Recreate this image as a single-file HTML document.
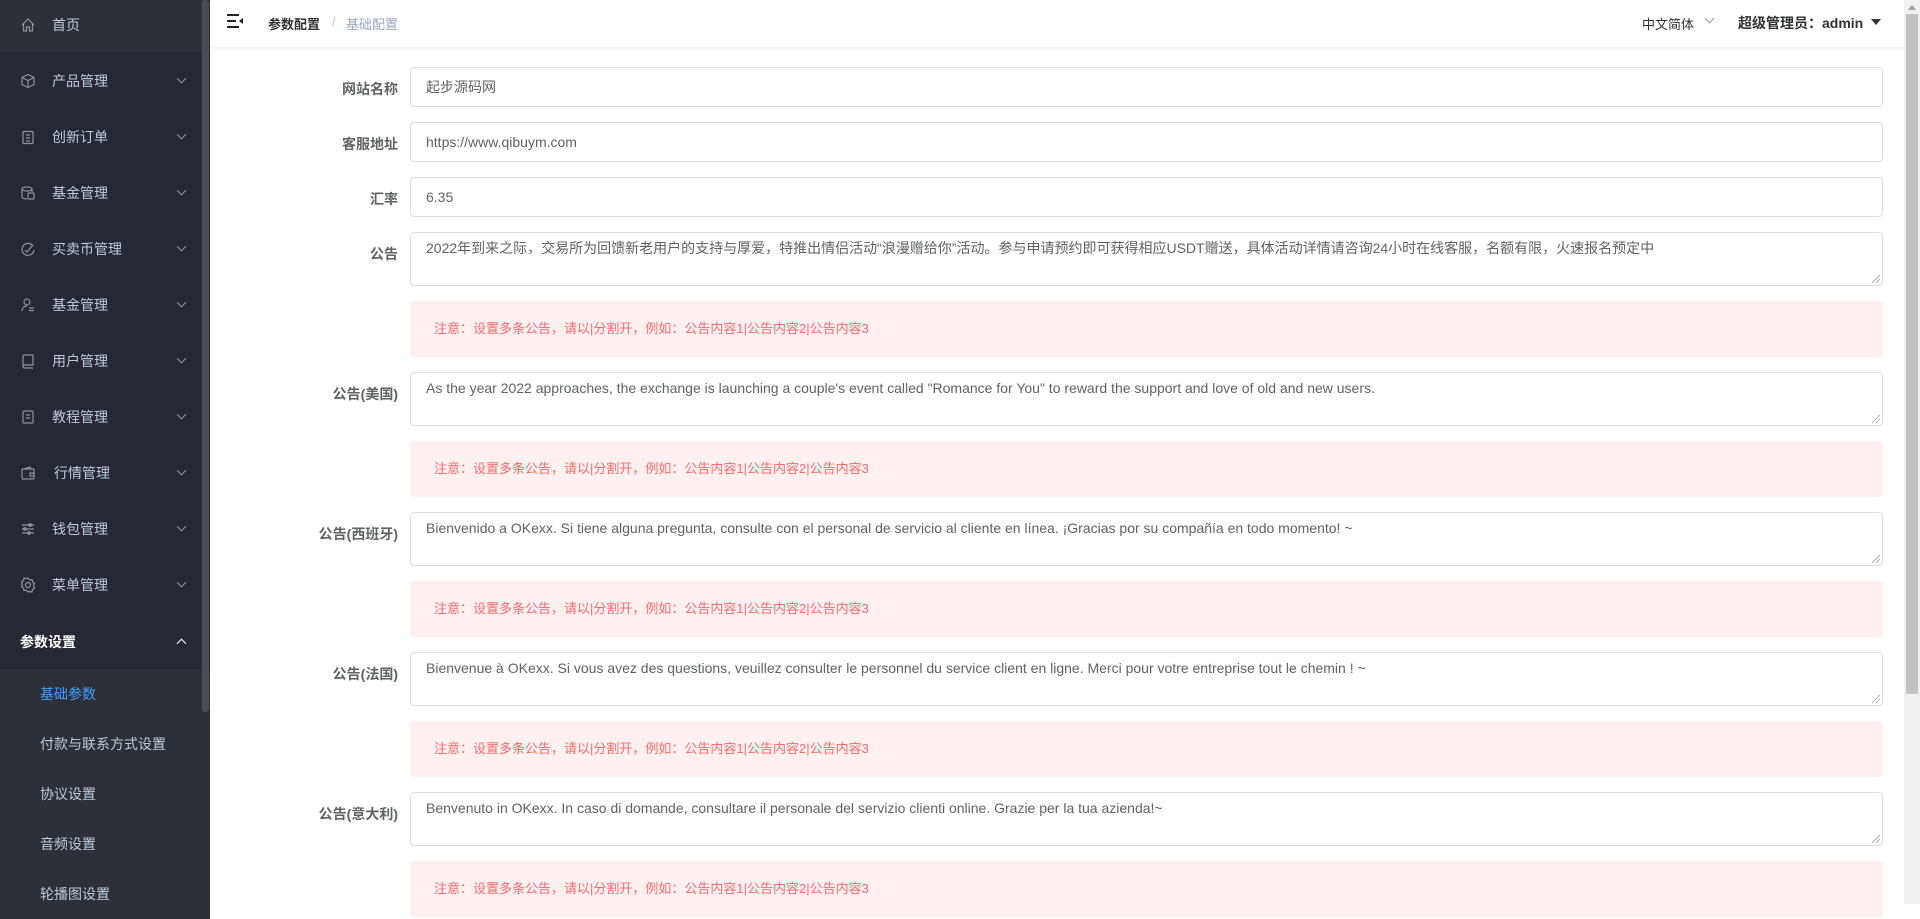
<!DOCTYPE html>
<html><head><meta charset="utf-8"><style>
*{box-sizing:border-box;margin:0;padding:0}
body{width:1920px;height:904px;overflow:hidden;font-family:"Liberation Sans","Noto Sans CJK SC",sans-serif;background:#fff;position:relative}
.side{position:absolute;left:0;top:0;width:210px;height:904px;background:#262833;color:#bfcbd9;font-size:14px}
.it{position:absolute;left:0;width:210px;height:56px;display:flex;align-items:center}
.it .ic{position:absolute;left:20px;width:16px;height:16px}
.it .tx{position:absolute;left:52px}
.it .ar{position:absolute;left:178px;width:7px;height:7px;border-right:1px solid #909399;border-bottom:1px solid #909399;transform:rotate(45deg);top:22px}
.sub{position:absolute;left:0;width:210px;height:50px;background:#2e3038;display:flex;align-items:center;padding-left:40px;color:#bfcbd9;font-size:14px}
.sb{position:absolute;left:202px;top:0;width:7px;height:712px;background:#4a4c55;border-radius:3px}
.hdr{position:absolute;left:210px;top:0;width:1694px;height:47px;background:#fff;box-shadow:0 1px 4px rgba(0,21,41,.08)}
.lbl{position:absolute;right:1522px;font-size:14px;font-weight:bold;color:#606266;white-space:nowrap}
.inp{position:absolute;left:410px;width:1473px;border:1px solid #dcdfe6;border-radius:4px;font-size:14px;color:#606266;padding-left:15px}
.ta{height:54px;padding-top:5px;line-height:20px}
.ta:after{content:"";position:absolute;right:2px;bottom:2px;width:8px;height:8px;background:linear-gradient(135deg,transparent 45%,#999 45%,#999 52%,transparent 52%,transparent 70%,#999 70%,#999 77%,transparent 77%)}
.al{position:absolute;left:410px;width:1473px;height:56px;background:#fef0f0;border-radius:4px;color:#f56c6c;font-size:13px;padding-left:24px;line-height:56px}
.vs{position:absolute;left:1904px;top:0;width:16px;height:904px;background:#f1f1f1}
</style></head><body>
<div class="side">
<div style="position:absolute;left:0;top:0;width:210px;height:52px;background:#2e3038"></div>
<div class="it" style="top:-3px"><svg class="ic" viewBox="0 0 16 16" fill="none" stroke="#909399" stroke-width="1.2"><path d="M2 8L8 2l6 6M3.5 6.5V14h3v-4h3v4h3V6.5"/></svg><span class="tx">首页</span></div>
<div class="it" style="top:53px"><svg class="ic" viewBox="0 0 16 16" fill="none" stroke="#909399" stroke-width="1.2"><path d="M8 1.5l6 3v7l-6 3-6-3v-7zM2 4.5l6 3 6-3M8 7.5v7"/></svg><span class="tx">产品管理</span><i class="ar"></i></div>
<div class="it" style="top:109px"><svg class="ic" viewBox="0 0 16 16" fill="none" stroke="#909399" stroke-width="1.2"><rect x="3" y="2.5" width="10" height="12" rx="1"/><path d="M6 6h4M6 9h4M6 12h4"/></svg><span class="tx">创新订单</span><i class="ar"></i></div>
<div class="it" style="top:165px"><svg class="ic" viewBox="0 0 16 16" fill="none" stroke="#909399" stroke-width="1.2"><ellipse cx="7" cy="4" rx="5" ry="2"/><path d="M2 4v8c0 1 2 2 5 2M12 4v3"/><rect x="8" y="8" width="6" height="6" rx="1"/></svg><span class="tx">基金管理</span><i class="ar"></i></div>
<div class="it" style="top:221px"><svg class="ic" viewBox="0 0 16 16" fill="none" stroke="#909399" stroke-width="1.2"><path d="M13 5A6 6 0 1 0 14 9M5 9l2 2 6-7"/></svg><span class="tx">买卖币管理</span><i class="ar"></i></div>
<div class="it" style="top:277px"><svg class="ic" viewBox="0 0 16 16" fill="none" stroke="#909399" stroke-width="1.2"><circle cx="7" cy="5" r="3"/><path d="M2 14c0-3 2-5 5-5M9 11h5M9 13.5h5"/></svg><span class="tx">基金管理</span><i class="ar"></i></div>
<div class="it" style="top:333px"><svg class="ic" viewBox="0 0 16 16" fill="none" stroke="#909399" stroke-width="1.2"><path d="M3 2h10v10H4.5a1.5 1.5 0 0 0 0 3H13M3 2v11.5"/></svg><span class="tx">用户管理</span><i class="ar"></i></div>
<div class="it" style="top:389px"><svg class="ic" viewBox="0 0 16 16" fill="none" stroke="#909399" stroke-width="1.2"><rect x="3" y="2" width="10" height="12" rx="1"/><path d="M6 6h4M6 9h4"/></svg><span class="tx">教程管理</span><i class="ar"></i></div>
<div class="it" style="top:445px"><svg class="ic" viewBox="0 0 16 16" fill="none" stroke="#909399" stroke-width="1.2"><rect x="2" y="4" width="12" height="10" rx="1"/><path d="M4 4l6-2 1 2M10 8h4v3h-4z"/></svg><span class="tx" style="left:54px">行情管理</span><i class="ar"></i></div>
<div class="it" style="top:501px"><svg class="ic" viewBox="0 0 16 16" fill="none" stroke="#909399" stroke-width="1.2"><path d="M2 4h12M2 8h12M2 12h12"/><circle cx="10" cy="4" r="1.3"/><circle cx="5" cy="8" r="1.3"/><circle cx="9" cy="12" r="1.3"/></svg><span class="tx">钱包管理</span><i class="ar"></i></div>
<div class="it" style="top:557px"><svg class="ic" viewBox="0 0 16 16" fill="none" stroke="#909399" stroke-width="1.2"><circle cx="8" cy="8" r="2.5"/><path d="M8 1l1.5 2 2.5-.5.5 2.5 2 1.5-1 2.3 1 2.2-2 1.5-.5 2.5-2.5-.5L8 15l-1.5-2-2.5.5-.5-2.5-2-1.5 1-2.2-1-2.3 2-1.5.5-2.5 2.5.5z"/></svg><span class="tx">菜单管理</span><i class="ar"></i></div>
<div class="it" style="top:614px;color:#fff;font-weight:bold"><span class="tx" style="left:20px">参数设置</span><i class="ar" style="transform:rotate(225deg);top:26px;border-color:#fff"></i></div>
<div class="sub" style="top:669px;color:#409eff">基础参数</div>
<div class="sub" style="top:719px">付款与联系方式设置</div>
<div class="sub" style="top:769px">协议设置</div>
<div class="sub" style="top:819px">音频设置</div>
<div class="sub" style="top:869px">轮播图设置</div>
<div class="sb"></div>
</div>
<div class="hdr">
<svg style="position:absolute;left:17px;top:14px" width="16" height="14" viewBox="0 0 16 14"><path d="M0 1h12M0 7h9M0 13h12" stroke="#222" stroke-width="2"/><path d="M16 4v6l-4-3z" fill="#222"/></svg>
<span style="position:absolute;left:58px;top:14px;font-size:13px;font-weight:bold;color:#303133">参数配置</span>
<span style="position:absolute;left:122px;top:14px;font-size:13px;color:#c0c4cc">/</span>
<span style="position:absolute;left:136px;top:14px;font-size:13px;color:#97a8be">基础配置</span>
<span style="position:absolute;left:1432px;top:14px;font-size:13px;color:#303133">中文简体</span>
<i style="position:absolute;left:1496px;top:15px;width:7px;height:7px;border-right:1px solid #909399;border-bottom:1px solid #909399;transform:rotate(45deg)"></i>
<span style="position:absolute;left:1528px;top:13px;font-size:14px;font-weight:bold;color:#303133">超级管理员：admin</span>
<span style="position:absolute;left:1661px;top:19px;border:5px solid transparent;border-top:6px solid #303133"></span>
</div>
<div class="lbl" style="top:79px">网站名称</div>
<div class="inp" style="top:67px;height:40px;line-height:38px">起步源码网</div>
<div class="lbl" style="top:134px">客服地址</div>
<div class="inp" style="top:122px;height:40px;line-height:38px">https://www.qibuym.com</div>
<div class="lbl" style="top:189px">汇率</div>
<div class="inp" style="top:177px;height:40px;line-height:38px">6.35</div>

<div class="lbl" style="top:244px">公告</div>
<div class="inp ta" style="top:232px">2022年到来之际，交易所为回馈新老用户的支持与厚爱，特推出情侣活动“浪漫赠给你”活动。参与申请预约即可获得相应USDT赠送，具体活动详情请咨询24小时在线客服，名额有限，火速报名预定中</div>
<div class="al" style="top:301px">注意：设置多条公告，请以|分割开，例如：公告内容1|公告内容2|公告内容3</div>

<div class="lbl" style="top:384px">公告(美国)</div>
<div class="inp ta" style="top:372px">As the year 2022 approaches, the exchange is launching a couple's event called "Romance for You" to reward the support and love of old and new users.</div>
<div class="al" style="top:441px">注意：设置多条公告，请以|分割开，例如：公告内容1|公告内容2|公告内容3</div>

<div class="lbl" style="top:524px">公告(西班牙)</div>
<div class="inp ta" style="top:512px">Bienvenido a OKexx. Si tiene alguna pregunta, consulte con el personal de servicio al cliente en línea. ¡Gracias por su compañía en todo momento! ~</div>
<div class="al" style="top:581px">注意：设置多条公告，请以|分割开，例如：公告内容1|公告内容2|公告内容3</div>

<div class="lbl" style="top:664px">公告(法国)</div>
<div class="inp ta" style="top:652px">Bienvenue à OKexx. Si vous avez des questions, veuillez consulter le personnel du service client en ligne. Merci pour votre entreprise tout le chemin ! ~</div>
<div class="al" style="top:721px">注意：设置多条公告，请以|分割开，例如：公告内容1|公告内容2|公告内容3</div>

<div class="lbl" style="top:804px">公告(意大利)</div>
<div class="inp ta" style="top:792px">Benvenuto in OKexx. In caso di domande, consultare il personale del servizio clienti online. Grazie per la tua azienda!~</div>
<div class="al" style="top:861px">注意：设置多条公告，请以|分割开，例如：公告内容1|公告内容2|公告内容3</div>

<div class="vs"><div style="position:absolute;left:2px;top:14px;width:12px;height:680px;background:#c1c1c1"></div><div style="position:absolute;left:4px;top:5px;border:4px solid transparent;border-bottom:5px solid #a3a3a3;border-top:0"></div></div>
</body></html>
